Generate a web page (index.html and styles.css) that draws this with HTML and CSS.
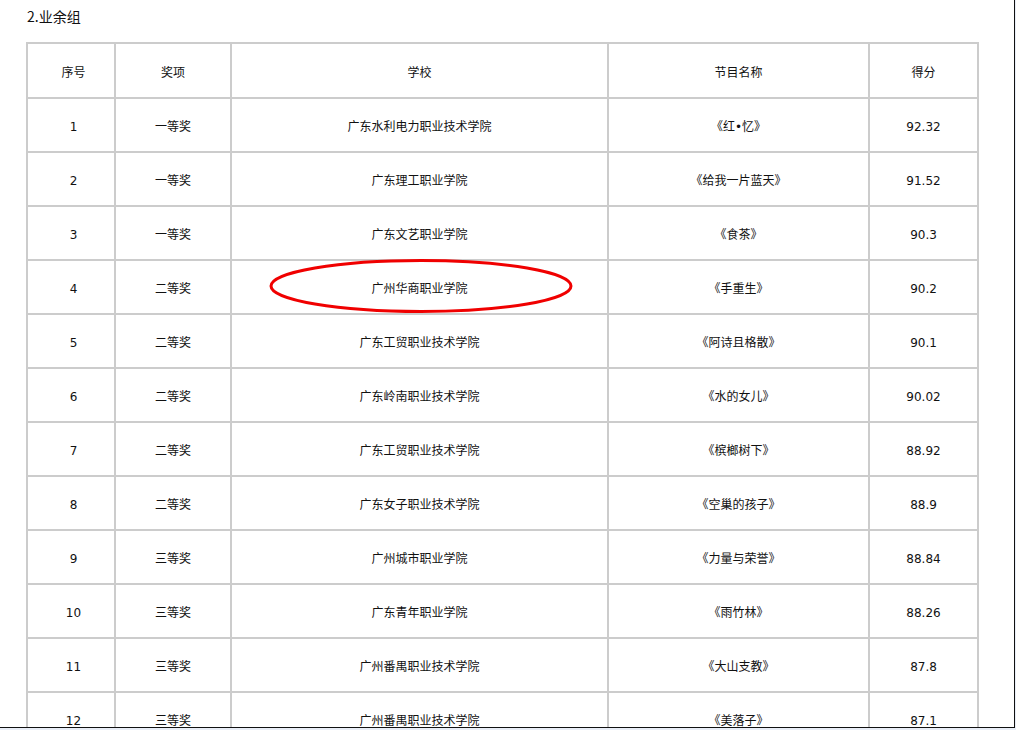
FILE: index.html
```html
<!DOCTYPE html>
<html lang="zh">
<head>
<meta charset="utf-8">
<title>2.业余组</title>
<link rel="stylesheet" href="styles.css">
</head>
<body>
<div class="frame">
  <h2 class="title">2.业余组</h2>
  <table class="results">
    <colgroup>
      <col class="c1"><col class="c2"><col class="c3"><col class="c4"><col class="c5">
    </colgroup>
    <tr class="head"><td>序号</td><td>奖项</td><td>学校</td><td>节目名称</td><td>得分</td></tr>
    <tr><td>1</td><td>一等奖</td><td>广东水利电力职业技术学院</td><td>《红•忆》</td><td>92.32</td></tr>
    <tr><td>2</td><td>一等奖</td><td>广东理工职业学院</td><td>《给我一片蓝天》</td><td>91.52</td></tr>
    <tr><td>3</td><td>一等奖</td><td>广东文艺职业学院</td><td>《食茶》</td><td>90.3</td></tr>
    <tr><td>4</td><td>二等奖</td><td>广州华商职业学院</td><td>《手重生》</td><td>90.2</td></tr>
    <tr><td>5</td><td>二等奖</td><td>广东工贸职业技术学院</td><td>《阿诗且格散》</td><td>90.1</td></tr>
    <tr><td>6</td><td>二等奖</td><td>广东岭南职业技术学院</td><td>《水的女儿》</td><td>90.02</td></tr>
    <tr><td>7</td><td>二等奖</td><td>广东工贸职业技术学院</td><td>《槟榔树下》</td><td>88.92</td></tr>
    <tr><td>8</td><td>二等奖</td><td>广东女子职业技术学院</td><td>《空巢的孩子》</td><td>88.9</td></tr>
    <tr><td>9</td><td>三等奖</td><td>广州城市职业学院</td><td>《力量与荣誉》</td><td>88.84</td></tr>
    <tr><td>10</td><td>三等奖</td><td>广东青年职业学院</td><td>《雨竹林》</td><td>88.26</td></tr>
    <tr><td>11</td><td>三等奖</td><td>广州番禺职业技术学院</td><td>《大山支教》</td><td>87.8</td></tr>
    <tr><td>12</td><td>三等奖</td><td>广州番禺职业技术学院</td><td>《美落子》</td><td>87.1</td></tr>
  </table>
  <svg class="mark" width="306" height="56" viewBox="0 0 306 56" aria-hidden="true">
    <ellipse cx="153" cy="28" rx="150" ry="25.5" fill="none" stroke="#f00000" stroke-width="3"/>
  </svg>
</div>
</body>
</html>
```

FILE: styles.css
```css
html, body {
  margin: 0;
  padding: 0;
}
body {
  background: #e9eef7;
  height: 730px;
  overflow: hidden;
}
.frame {
  position: relative;
  box-sizing: border-box;
  width: 1015px;
  height: 728px;
  background: #ffffff;
  border-right: 1px solid #111111;
  border-bottom: 1px solid #111111;
  overflow: hidden;
  padding: 7px 0 0 26px;
  font-family: "DejaVu Sans", "Noto Sans CJK SC", sans-serif;
  color: #111111;
}
.title {
  margin: 0 0 0 1px;
  font-family: "Noto Sans CJK SC", sans-serif;
  font-size: 14px;
  font-weight: normal;
  line-height: 18px;
  height: 35px;
}
.results {
  border-collapse: collapse;
  table-layout: fixed;
  width: 951px;
  border: 2px solid #cccccc;
  font-size: 12px;
}
.c1 { width: 88px; }
.c2 { width: 116px; }
.c3 { width: 377px; }
.c4 { width: 261px; }
.c5 { width: 109px; }
.results td {
  border: 2px solid #cccccc;
  height: 54px;
  padding: 4px 0 0 0;
  box-sizing: border-box;
  text-align: center;
  vertical-align: middle;
  line-height: 16px;
  white-space: nowrap;
}
.results td:first-child {
  padding-left: 5px;
}
.results .head td {
  height: 55px;
}
.mark {
  position: absolute;
  left: 268px;
  top: 258px;
}
```
